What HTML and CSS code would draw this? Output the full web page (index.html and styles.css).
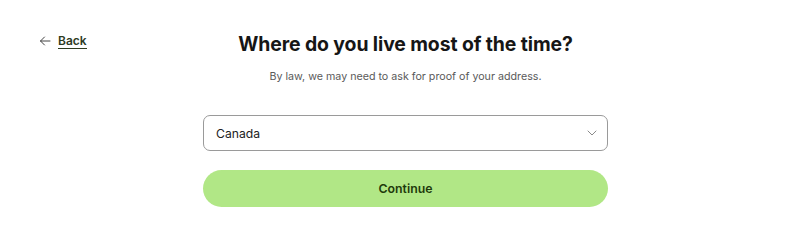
FILE: index.html
```html
<!DOCTYPE html>
<html>
<head>
<meta charset="utf-8">
<link rel="stylesheet" href="styles.css">
</head>
<body>
<div class="page">
  <a class="back" href="#">
    <svg class="back-icon" width="12" height="12" viewBox="0 0 12 12" fill="none" stroke="currentColor" stroke-width="1" stroke-linecap="round" stroke-linejoin="round"><path d="M11 6H1.5M5.5 2L1.5 6L5.5 10"/></svg>
    <span class="back-text">Back</span>
  </a>
  <main class="main">
    <h1 class="title">Where do you live most of the time?</h1>
    <p class="subtitle">By law, we may need to ask for proof of your address.</p>
    <div class="select">
      <span class="select-value">Canada</span>
      <svg class="chev" width="10" height="6" viewBox="0 0 10 6" fill="none" stroke="#8a8a8a" stroke-width="1" stroke-linecap="round" stroke-linejoin="round"><path d="M1 1L5 5L9 1"/></svg>
    </div>
    <button class="continue">Continue</button>
  </main>
</div>
</body>
</html>
```
FILE: styles.css
```css
html, body {
  margin: 0;
  padding: 0;
  background: #ffffff;
}
body {
  font-family: Inter, "Noto Sans", sans-serif;
  color: #1a1a1a;
}
.page {
  position: relative;
  width: 800px;
  height: 246px;
}
.back {
  position: absolute;
  left: 39px;
  top: 33px;
  display: flex;
  align-items: center;
  gap: 7px;
  color: #2e3b1f;
  text-decoration: none;
  font-size: 12px;
  font-weight: 600;
}
.back-icon {
  color: #444;
}
.back-text {
  border-bottom: 1.5px solid #2e3b1f;
  line-height: 15px;
}
.main {
  display: flex;
  flex-direction: column;
  align-items: center;
  padding-top: 30px;
  padding-left: 11px;
}
.title {
  margin: 0;
  font-size: 19.4px;
  font-weight: 700;
  line-height: 28px;
  color: #161616;
  letter-spacing: -0.1px;
}
.subtitle {
  margin: 11px 0 0;
  font-size: 10.7px;
  line-height: 16px;
  color: #5a5a5a;
}
.select {
  margin-top: 30px;
  box-sizing: border-box;
  width: 405px;
  height: 36px;
  border: 1px solid #9a9a9a;
  border-radius: 7px;
  display: flex;
  align-items: center;
  justify-content: space-between;
  padding: 0 10px 0 12px;
}
.select-value {
  font-size: 12.2px;
  color: #222;
}
.continue {
  margin-top: 19px;
  width: 405px;
  height: 37px;
  border: none;
  border-radius: 19px;
  background: #b1e786;
  color: #1f3a0c;
  font-family: Inter, "Noto Sans", sans-serif;
  font-size: 12.3px;
  font-weight: 600;
  cursor: pointer;
}
```
